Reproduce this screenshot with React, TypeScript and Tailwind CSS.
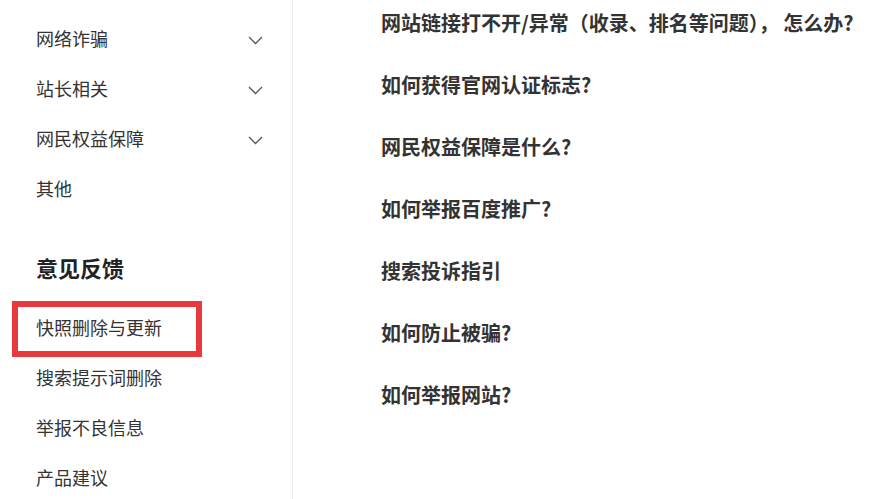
import * as React from "react";

const groups = [
  { label: "网络诈骗", expandable: true },
  { label: "站长相关", expandable: true },
  { label: "网民权益保障", expandable: true },
  { label: "其他", expandable: false },
];

const feedback = ["快照删除与更新", "搜索提示词删除", "举报不良信息", "产品建议"];

const questions = [
  "网站链接打不开/异常（收录、排名等问题）， 怎么办?",
  "如何获得官网认证标志?",
  "网民权益保障是什么?",
  "如何举报百度推广?",
  "搜索投诉指引",
  "如何防止被骗?",
  "如何举报网站?",
];

function Chevron() {
  return (
    <svg width="15" height="9" viewBox="0 0 15 9" fill="none" className="mt-[4px] shrink-0">
      <path d="M1 1L7.5 7.5L14 1" stroke="#555" strokeWidth="1.3" />
    </svg>
  );
}

export default function App() {
  return (
    <div
      className="flex h-[499px] w-[878px] overflow-hidden bg-white text-[#333]"
      style={{ fontFamily: '"Microsoft YaHei", "Noto Sans CJK SC", sans-serif' }}
    >
      <aside className="w-[293px] shrink-0 border-r border-[#eeeeee] pl-[36px] pr-[29px] pt-[13px]">
        <ul>
          {groups.map((g) => (
            <li key={g.label} className="flex h-[50px] items-center justify-between text-[18px]">
              <span>{g.label}</span>
              {g.expandable ? <Chevron /> : null}
            </li>
          ))}
        </ul>

        <h3 className="mt-[39px] mb-[20px] text-[22px] font-bold leading-[30px] text-[#222]">意见反馈</h3>

        <ul>
          {feedback.map((f, i) => (
            <li key={f} className="relative flex h-[50px] items-center text-[18px]">
              {i === 0 ? (
                <span className="pointer-events-none absolute -top-[1px] -bottom-[5px] -left-[24px] w-[190px] border-[6px] border-[#e8393e]" />
              ) : null}
              <span>{f}</span>
            </li>
          ))}
        </ul>
      </aside>

      <main className="flex flex-col gap-[34px] pl-[88px] pt-[9px]">
        {questions.map((q) => (
          <div key={q} className="whitespace-pre text-[20px] font-bold leading-[28px] text-[#333]">
            {q}
          </div>
        ))}
      </main>
    </div>
  );
}
